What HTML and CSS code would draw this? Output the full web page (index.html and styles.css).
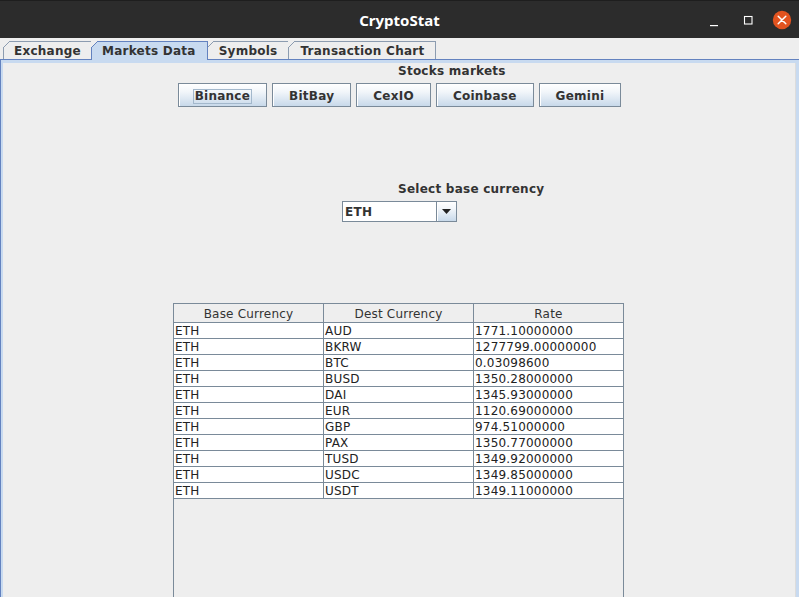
FILE: index.html
```html
<!DOCTYPE html>
<html lang="en">
<head>
<meta charset="utf-8">
<title>CryptoStat</title>
<link rel="stylesheet" href="styles.css">
</head>
<body>
<div class="window">
  <header class="titlebar">
    <div class="tb-spacer"></div>
    <div class="tb-title">CryptoStat</div>
    <div class="tb-controls">
      <span class="tb-btn">
        <svg width="24" height="24" viewBox="0 0 24 24"><rect x="8" y="17" width="8" height="1.2" fill="#fff"/></svg>
      </span>
      <span class="tb-btn">
        <svg width="24" height="24" viewBox="0 0 24 24"><rect x="8.5" y="8.5" width="7.5" height="7.5" fill="none" stroke="#fff" stroke-width="1.1"/></svg>
      </span>
      <span class="tb-btn">
        <svg width="24" height="24" viewBox="0 0 24 24"><circle cx="12" cy="12" r="9.2" fill="#e2531f"/><path d="M8.2 8.2 L15.8 15.8 M15.8 8.2 L8.2 15.8" stroke="#fff" stroke-width="1.5" stroke-linecap="round"/></svg>
      </span>
    </div>
  </header>

  <nav class="tabstrip">
    <div class="tab tab-first">Exchange</div>
    <div class="tab tab-selected">Markets Data</div>
    <div class="tab">Symbols</div>
    <div class="tab">Transaction Chart</div>
  </nav>

  <div class="tab-frame">
    <main class="panel">
      <div class="label label-stocks">Stocks markets</div>
      <div class="button-row">
        <button class="btn"><span class="focus">Binance</span></button>
        <button class="btn">BitBay</button>
        <button class="btn">CexIO</button>
        <button class="btn">Coinbase</button>
        <button class="btn">Gemini</button>
      </div>

      <div class="label label-select">Select base currency</div>
      <div class="combo">
        <div class="combo-value">ETH</div>
        <div class="combo-arrow">
          <svg width="9" height="5" viewBox="0 0 9 5"><path d="M0 0 H9 L4.5 5 Z" fill="#222"/></svg>
        </div>
      </div>

      <div class="scroll">
        <table class="grid">
          <thead>
            <tr><th>Base Currency</th><th>Dest Currency</th><th>Rate</th></tr>
          </thead>
          <tbody>
            <tr><td>ETH</td><td>AUD</td><td>1771.10000000</td></tr>
            <tr><td>ETH</td><td>BKRW</td><td>1277799.00000000</td></tr>
            <tr><td>ETH</td><td>BTC</td><td>0.03098600</td></tr>
            <tr><td>ETH</td><td>BUSD</td><td>1350.28000000</td></tr>
            <tr><td>ETH</td><td>DAI</td><td>1345.93000000</td></tr>
            <tr><td>ETH</td><td>EUR</td><td>1120.69000000</td></tr>
            <tr><td>ETH</td><td>GBP</td><td>974.51000000</td></tr>
            <tr><td>ETH</td><td>PAX</td><td>1350.77000000</td></tr>
            <tr><td>ETH</td><td>TUSD</td><td>1349.92000000</td></tr>
            <tr><td>ETH</td><td>USDC</td><td>1349.85000000</td></tr>
            <tr><td>ETH</td><td>USDT</td><td>1349.11000000</td></tr>
          </tbody>
        </table>
      </div>
    </main>
  </div>
</div>
</body>
</html>
```

FILE: styles.css
```css
* { box-sizing: border-box; }

html, body {
  margin: 0;
  padding: 0;
  width: 799px;
  height: 597px;
  overflow: hidden;
  background: #eeeeee;
}

.window {
  width: 799px;
  height: 597px;
  display: flex;
  flex-direction: column;
  font-family: "DejaVu Sans", sans-serif;
  color: #333333;
}

/* ---------- title bar ---------- */
.titlebar {
  height: 38px;
  flex: none;
  background: #2c2c2c;
  border-top: 1px solid #1e1e1e;
  display: grid;
  grid-template-columns: 1fr auto 1fr;
  align-items: center;
}

.tb-title {
  font-family: "Noto Sans", "DejaVu Sans", sans-serif;
  font-weight: 700;
  font-size: 15px;
  color: #ffffff;
  line-height: 36px;
}

.tb-controls {
  justify-self: end;
  display: flex;
  gap: 10px;
  padding-right: 5px;
  align-items: center;
}

.tb-btn {
  width: 24px;
  height: 24px;
  display: block;
}
.tb-btn svg { display: block; }

/* ---------- tabs ---------- */
.tabstrip {
  height: 21px;
  flex: none;
  display: flex;
  align-items: flex-end;
  padding-left: 3px;
  background: #eeeeee;
}

.tab {
  position: relative;
  height: 18px;
  padding: 1px 11px 0 11px;
  border: 1px solid #8c9cb0;
  border-bottom: none;
  background: #eeeeee;
  font-weight: 700;
  font-size: 12px;
  letter-spacing: 0.25px;
  line-height: 16px;
  color: #333333;
  white-space: nowrap;
}
.tab + .tab { margin-left: -1px; }

.tab-first {
  padding-left: 10px;
  padding-right: 10px;
}

.tab::before {
  content: "";
  position: absolute;
  left: -1px;
  top: -1px;
  width: 7px;
  height: 7px;
  background: linear-gradient(to bottom right,
    #eeeeee 0, #eeeeee calc(50% - 0.7px),
    #8c9cb0 calc(50% - 0.7px), #8c9cb0 calc(50% + 0.7px),
    transparent calc(50% + 0.7px));
}

.tab-selected {
  background: #c8daf0;
  border-color: #6382bf;
  height: 19px;
  margin-bottom: -1px;
  padding-left: 10px;
  padding-right: 11px;
  z-index: 2;
}
.tab-selected::before {
  background: linear-gradient(to bottom right,
    #eeeeee 0, #eeeeee calc(50% - 0.7px),
    #6382bf calc(50% - 0.7px), #6382bf calc(50% + 0.7px),
    transparent calc(50% + 0.7px));
}

.tab-frame {
  flex: 1;
  display: flex;
  border-top: 1px solid #6382bf;
  border-left: 1px solid #6382bf;
  background: #c8daf0;
  padding: 3px 3px 0 2px;
  min-height: 0;
}

/* ---------- panel ---------- */
.panel {
  flex: 1;
  background: #eeeeee;
  border-right: 1px solid #dcdcdc;
  display: flex;
  flex-direction: column;
  min-height: 0;
}

.label {
  font-weight: 700;
  font-size: 12px;
  letter-spacing: 0.25px;
  line-height: 16px;
  color: #333333;
  white-space: nowrap;
}

.label-stocks {
  margin-left: 395px;
}

.button-row {
  display: flex;
  justify-content: center;
  gap: 5px;
  margin-top: 4px;
  padding-left: 1px;
}

.btn {
  height: 24px;
  padding: 1px 16px 0;
  border: 1px solid #7a8a99;
  border-radius: 0;
  background: linear-gradient(to bottom, #ffffff 0%, #f2f6fa 35%, #c8d9ea 100%);
  box-shadow: inset 1px 1px 0 #ffffff;
  font-family: "DejaVu Sans", sans-serif;
  font-weight: 700;
  font-size: 12px;
  letter-spacing: 0.25px;
  color: #333333;
  line-height: 20px;
}

.focus {
  display: inline-block;
  border: 1px solid #a3b8cc;
  padding: 0 1px;
  margin: 0 -2px;
  line-height: 13px;
}

.label-select {
  margin-left: 395px;
  margin-top: 74px;
}

.combo {
  margin-left: 339px;
  margin-top: 4px;
  width: 115px;
  height: 21px;
  border: 1px solid #7a8a99;
  background: #ffffff;
  display: flex;
}

.combo-value {
  flex: 1;
  padding: 1px 0 0 2px;
  font-weight: 700;
  font-size: 12px;
  letter-spacing: 0.25px;
  line-height: 18px;
  color: #333333;
}

.combo-arrow {
  width: 20px;
  border-left: 1px solid #7a8a99;
  background: linear-gradient(to bottom, #ffffff 0%, #f2f6fa 35%, #c8d9ea 100%);
  box-shadow: inset 1px 1px 0 #ffffff;
  display: flex;
  align-items: center;
  justify-content: center;
}
.combo-arrow svg { display: block; }

/* ---------- table ---------- */
.scroll {
  margin-left: 170px;
  margin-top: 81px;
  width: 451px;
  flex: 1;
  border: 1px solid #7a8a99;
  border-bottom: none;
  background: #eeeeee;
}

.grid {
  width: 449px;
  table-layout: fixed;
  border-collapse: separate;
  border-spacing: 0;
  font-size: 12px;
  letter-spacing: 0.2px;
}

.grid th,
.grid td {
  padding: 0;
  border-bottom: 1px solid #7a8a99;
  border-right: 1px solid #7a8a99;
  width: 150px;
  white-space: nowrap;
  overflow: hidden;
}
.grid th:last-child,
.grid td:last-child {
  border-right: none;
  width: 149px;
}

.grid th {
  font-weight: 400;
  padding-top: 2px;
  line-height: 16px;
  color: #333333;
  background: #eeeeee;
  text-align: center;
}

.grid td {
  padding-top: 1px;
  padding-left: 1px;
  line-height: 14px;
  color: #222222;
  background: #ffffff;
  text-align: left;
}
```
